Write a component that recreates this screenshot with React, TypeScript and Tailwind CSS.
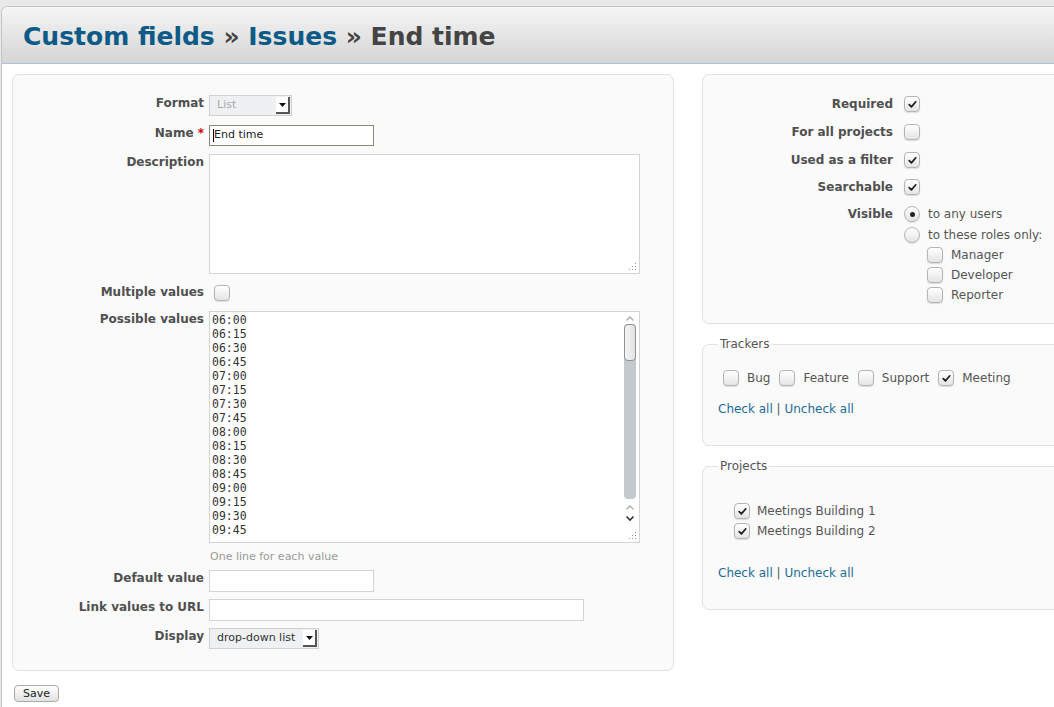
import React from 'react';

const font = { fontFamily: '"DejaVu Sans", Verdana, sans-serif' };

const Check = ({ checked }: { checked?: boolean }) => (
  <span className="inline-flex w-[16px] h-[16px] shrink-0 items-center justify-center rounded-[4px] border border-[#b4b4b4] bg-linear-to-b from-white to-[#e4e4e4] shadow-[0_1px_1px_rgba(0,0,0,0.12)]">
    {checked && (
      <svg width="11" height="11" viewBox="0 0 11 11">
        <path d="M2.2 5.6 L4.4 7.9 L8.8 2.8" stroke="#1e1e1e" strokeWidth="1.7" fill="none" strokeLinecap="round" strokeLinejoin="round" />
      </svg>
    )}
  </span>
);

const Radio = ({ checked }: { checked?: boolean }) => (
  <span className="inline-flex w-[16px] h-[16px] shrink-0 items-center justify-center rounded-full border border-[#b4b4b4] bg-linear-to-b from-white to-[#e4e4e4] shadow-[0_1px_1px_rgba(0,0,0,0.12)]">
    {checked && <span className="w-[5px] h-[5px] rounded-full bg-[#222]" />}
  </span>
);

const Grip = () => (
  <svg width="10" height="10" viewBox="0 0 10 10" className="absolute right-[2px] bottom-[2px]">
    {[[8, 2], [8, 5], [8, 8], [5, 5], [5, 8], [2, 8]].map(([x, y]) => (
      <rect key={`${x}-${y}`} x={x} y={y} width="1" height="1" fill="#999" />
    ))}
  </svg>
);

const SelectBox = ({ value, width, disabled }: { value: string; width: string; disabled?: boolean }) => (
  <div className={`flex h-[21px] ${width} items-center justify-between border border-[#d0d0d0] bg-[#eef0f1] pl-[7px] pr-[1px]`}>
    <span className={`text-[11px] ${disabled ? 'text-[#a8a8a8]' : 'text-[#333]'}`}>{value}</span>
    <span className="flex h-[17px] w-[14px] items-center justify-center border-r-2 border-b-2 border-[#555] bg-white">
      <svg width="7" height="4" viewBox="0 0 7 4"><path d="M0 0 H7 L3.5 4 Z" fill="#111" /></svg>
    </span>
  </div>
);

const Label = ({ children, className = 'w-[196px] pr-[5px]' }: { children: React.ReactNode; className?: string }) => (
  <div className={`shrink-0 text-right text-[12px] font-bold leading-[16px] text-[#505050] ${className}`}>{children}</div>
);

const values = ['06:00', '06:15', '06:30', '06:45', '07:00', '07:15', '07:30', '07:45', '08:00', '08:15', '08:30', '08:45', '09:00', '09:15', '09:30', '09:45'];

const trackers = [
  { name: 'Bug', checked: false },
  { name: 'Feature', checked: false },
  { name: 'Support', checked: false },
  { name: 'Meeting', checked: true },
];

const flags: [string, boolean, string][] = [
  ['Required', true, 'h-[28px]'],
  ['For all projects', false, 'h-[28px]'],
  ['Used as a filter', true, 'h-[27px]'],
  ['Searchable', true, 'h-[27px]'],
];

export default function App() {
  return (
    <div className="min-h-[707px] w-[1054px] overflow-hidden bg-[#e9e9e9] pt-[6px] pl-[1px]" style={font}>
      <div className="min-h-[701px] rounded-tl-[6px] border-l border-t border-[#c4c4c4] bg-white">
        <div className="h-[57px] rounded-tl-[6px] border-b border-[#a9c7da] bg-linear-to-b from-[#f5f5f5] to-[#d5d5d5] pl-[21px] pt-[13px]">
          <h1 className="text-[25px] font-bold leading-[34px] text-[#444]">
            <span className="text-[#0e5a86]">Custom fields</span> » <span className="text-[#0e5a86]">Issues</span> » End time
          </h1>
        </div>

        <div className="flex gap-[28px] pl-[10px] pt-[10px]">
          <div className="w-[662px] h-[597px] shrink-0 rounded-[7px] border border-[#e2e2e2] bg-[#fafafa] pt-[20px]">
            <div className="flex">
              <Label>Format</Label>
              <SelectBox value="List" width="w-[83px]" disabled />
            </div>
            <div className="flex mt-[9px]">
              <Label>Name <span className="text-[#c00]">*</span></Label>
              <div className="flex h-[21px] w-[165px] items-center border border-[#8a8a7a] bg-white pl-[3px] text-[11px] text-[#222]">
                <span className="h-[13px] w-px bg-black" />End time
              </div>
            </div>
            <div className="flex mt-[8px]">
              <Label>Description</Label>
              <div className="relative h-[120px] w-[431px] border border-[#d4d4d4] bg-white"><Grip /></div>
            </div>
            <div className="flex mt-[10px] h-[20px]">
              <Label>Multiple values</Label>
              <div className="pl-[5px]"><Check /></div>
            </div>
            <div className="flex mt-[7px]">
              <Label>Possible values</Label>
              <div className="relative flex h-[232px] w-[431px] border border-[#d4d4d4] bg-white">
                <div className="flex-1 overflow-hidden pl-[2px] pt-[1px] text-[11.5px] leading-[14px] text-[#333]" style={{ fontFamily: '"DejaVu Sans Mono", monospace' }}>
                  {values.map(v => <div key={v}>{v}</div>)}
                </div>
                <div className="relative mr-[2px] flex w-[14px] flex-col items-center pt-[2px]">
                  <svg width="10" height="7" viewBox="0 0 10 7" className="mt-[1px]"><path d="M1.5 5.5 L5 2 L8.5 5.5" stroke="#aaa" strokeWidth="1.3" fill="none" /></svg>
                  <div className="mt-[2px] flex h-[175px] w-[12px] flex-col rounded-[4px] bg-[#c4c9cd]">
                    <div className="h-[37px] w-[12px] rounded-[4px] border border-[#8d9296] bg-linear-to-r from-[#f4f4f4] to-[#e2e2e2]" />
                  </div>
                  <svg width="10" height="7" viewBox="0 0 10 7" className="mt-[5px]"><path d="M1.5 5.5 L5 2 L8.5 5.5" stroke="#aaa" strokeWidth="1.3" fill="none" /></svg>
                  <svg width="10" height="7" viewBox="0 0 10 7" className="mt-[4px]"><path d="M1.5 1.5 L5 5 L8.5 1.5" stroke="#333" strokeWidth="1.6" fill="none" /></svg>
                </div>
                <Grip />
              </div>
            </div>
            <div className="flex mt-[7px]">
              <div className="w-[197px]" />
              <div className="text-[11px] leading-[14px] text-[#999]">One line for each value</div>
            </div>
            <div className="flex mt-[6px]">
              <Label>Default value</Label>
              <div className="h-[22px] w-[165px] border border-[#d4d4d4] bg-white" />
            </div>
            <div className="flex mt-[7px]">
              <Label>Link values to URL</Label>
              <div className="h-[22px] w-[375px] border border-[#d4d4d4] bg-white" />
            </div>
            <div className="flex mt-[7px]">
              <Label>Display</Label>
              <SelectBox value="drop-down list" width="w-[110px]" />
            </div>
          </div>

          <div className="flex w-[380px] shrink-0 flex-col">
            <div className="h-[250px] rounded-[7px] border border-[#e2e2e2] bg-[#fafafa] pt-[21px]">
              {flags.map(([l, c, h]) => (
                <div key={l} className={`flex ${h}`}>
                  <div className="flex h-[16px] items-center">
                    <Label className="w-[201px] pr-[11px]">{l}</Label>
                    <Check checked={c} />
                  </div>
                </div>
              ))}
              <div className="flex">
                <Label className="w-[201px] pr-[11px]">Visible</Label>
                <div className="flex flex-col text-[12px] leading-[16px] text-[#555]">
                  <div className="flex items-center gap-[8px]"><Radio checked />to any users</div>
                  <div className="mt-[5px] flex items-center gap-[8px]"><Radio />to these roles only:</div>
                  <div className="pl-[23px]">
                    {['Manager', 'Developer', 'Reporter'].map(r => (
                      <div key={r} className="mt-[4px] flex items-center gap-[8px]"><Check />{r}</div>
                    ))}
                  </div>
                </div>
              </div>
            </div>

            <fieldset className="mt-[12px] h-[110px] rounded-[7px] border border-[#e2e2e2] bg-[#fafafa] pl-[15px] pr-0 text-[12px] text-[#555]">
              <legend className="px-[2px] leading-[16px]">Trackers</legend>
              <div className="mt-[18px] flex items-center pl-[5px] leading-[16px]">
                {trackers.map(t => (
                  <span key={t.name} className="mr-[9px] flex items-center gap-[8px]"><Check checked={t.checked} />{t.name}</span>
                ))}
              </div>
              <div className="mt-[15px] leading-[16px] text-[#1d6a96]">Check all <span className="text-[#555]">|</span> Uncheck all</div>
            </fieldset>

            <fieldset className="mt-[12px] h-[152px] rounded-[7px] border border-[#e2e2e2] bg-[#fafafa] pl-[15px] pr-0 text-[12px] text-[#555]">
              <legend className="px-[2px] leading-[16px]">Projects</legend>
              <div className="mt-[29px] pl-[16px] leading-[16px]">
                <div className="flex items-center gap-[7px]"><Check checked />Meetings Building 1</div>
                <div className="mt-[4px] flex items-center gap-[7px]"><Check checked />Meetings Building 2</div>
              </div>
              <div className="mt-[26px] leading-[16px] text-[#1d6a96]">Check all <span className="text-[#555]">|</span> Uncheck all</div>
            </fieldset>
          </div>
        </div>

        <div className="flex pl-[12px] pt-[14px]">
          <button className="h-[17px] rounded-[4px] border border-[#aaa] bg-linear-to-b from-white to-[#e2e2e2] px-[8px] text-[11px] leading-[14px] text-[#222]">Save</button>
        </div>
      </div>
    </div>
  );
}
